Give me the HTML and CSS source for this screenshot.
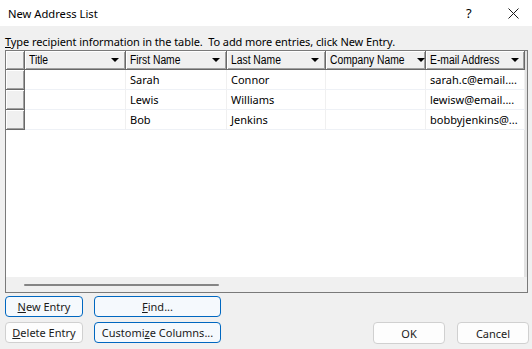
FILE: index.html
```html
<!DOCTYPE html>
<html>
<head>
	<title>New Address List</title>
	<link rel="stylesheet" href="styles.css">
</head>
<body>
	<div class="titlebar">
		<div class="caption">New Address List</div>
		<div class="help">?</div>
		<div class="close">
			<svg width="11" height="11" viewBox="0 0 11 11"><path d="M0.5 0.5L10.5 10.5M10.5 0.5L0.5 10.5" stroke="#1a1a1a" stroke-width="1"/></svg>
		</div>
	</div>
	<div class="content">
		<div class="hint"><u>T</u>ype recipient information in the table.&nbsp; To add more entries, click New Entry.</div>
		<div class="grid">
			<div class="rows">
				<div class="row head">
					<div class="sel"></div>
					<div class="hcell"><span>Title</span><i class="arrow"></i></div>
					<div class="hcell"><span>First Name</span><i class="arrow"></i></div>
					<div class="hcell"><span>Last Name</span><i class="arrow"></i></div>
					<div class="hcell"><span>Company Name</span><i class="arrow"></i></div>
					<div class="hcell"><span>E-mail Address</span><i class="arrow"></i></div>
				</div>
				<div class="row">
					<div class="sel"></div>
					<div class="cell"></div>
					<div class="cell">Sarah</div>
					<div class="cell">Connor</div>
					<div class="cell"></div>
					<div class="cell">sarah.c@email....</div>
				</div>
				<div class="row">
					<div class="sel"></div>
					<div class="cell"></div>
					<div class="cell">Lewis</div>
					<div class="cell">Williams</div>
					<div class="cell"></div>
					<div class="cell">lewisw@email....</div>
				</div>
				<div class="row">
					<div class="sel"></div>
					<div class="cell"></div>
					<div class="cell">Bob</div>
					<div class="cell">Jenkins</div>
					<div class="cell"></div>
					<div class="cell">bobbyjenkins@...</div>
				</div>
			</div>
			<div class="hscroll"><div class="thumb"></div></div>
		</div>
		<div class="actions">
			<div class="left">
				<button class="btn focus"><u>N</u>ew Entry</button>
				<button class="btn focus"><u>F</u>ind...</button>
				<button class="btn"><u>D</u>elete Entry</button>
				<button class="btn focus">Customi<u>z</u>e Columns...</button>
			</div>
			<div class="right">
				<button class="btn small">OK</button>
				<button class="btn small">Cancel</button>
			</div>
		</div>
	</div>
</body>
</html>
```

FILE: styles.css
```css
body {
	margin: 0;
	width: 532px;
	height: 349px;
	background-color: #f0f0f0;
	font-family: "Noto Sans", "Open Sans", sans-serif;
	font-size: 11px;
	color: #000;
	overflow: hidden;
}

.titlebar {
	height: 26px;
	background-color: #fff;
	display: flex;
	align-items: center;
}

.caption {
	flex: 1;
	padding-left: 8px;
	font-size: 11.2px;
}

.help {
	width: 20px;
	font-size: 13px;
	margin-right: 22px;
}

.close {
	width: 24px;
	display: flex;
	align-items: center;
}

.content {
	padding: 0 4px 0 5px;
}

.hint {
	margin-top: 8px;
	height: 16px;
	line-height: 16px;
	letter-spacing: -0.08px;
}

.grid {
	height: 241px;
	border: 1px solid #7a7a7a;
	background-color: #fff;
	display: flex;
	flex-direction: column;
}

.rows {
	flex: 1;
	border-right: 3px solid #e3e3e3;
}

.row {
	display: grid;
	grid-template-columns: 19px 101px 101px 99px 100px 99px;
	height: 20px;
}

.row.head {
	height: 19px;
}

.sel {
	background-color: #f0f0f0;
	border-right: 1px solid #696969;
	border-bottom: 1px solid #696969;
	box-shadow: inset 1px 1px #fff, inset -1px -1px #a0a0a0;
}

.hcell {
	background-color: #f0f0f0;
	border-right: 1px solid #696969;
	border-bottom: 1px solid #696969;
	box-shadow: inset 1px 1px #fff, inset -1px -1px #a0a0a0;
	display: flex;
	align-items: center;
	justify-content: space-between;
	padding: 0 6px 0 4px;
	font-family: "Liberation Sans", Arial, sans-serif;
	font-size: 12px;
	white-space: nowrap;
}

.hcell span {
	display: inline-block;
	transform: scaleX(0.86);
	transform-origin: left center;
}

.arrow {
	width: 0;
	height: 0;
	border-left: 4px solid transparent;
	border-right: 4px solid transparent;
	border-top: 4px solid #000;
}

.cell {
	border-right: 1px solid #f0f0f0;
	border-bottom: 1px solid #eef1f6;
	padding-left: 4px;
	line-height: 19px;
	white-space: nowrap;
	overflow: hidden;
}

.hscroll {
	height: 15px;
	background-color: #f0f0f0;
	display: flex;
	align-items: center;
}

.thumb {
	margin-left: 18px;
	width: 195px;
	height: 2px;
	border-radius: 1px;
	background-color: #858585;
}

.actions {
	margin-top: 3px;
	display: flex;
	justify-content: space-between;
	align-items: flex-end;
}

.left {
	display: grid;
	grid-template-columns: 78px 127px;
	column-gap: 11px;
	row-gap: 5px;
}

.right {
	display: flex;
	gap: 12px;
	margin-right: -1px;
	margin-bottom: -1px;
}

.btn {
	height: 21px;
	padding: 0;
	border: 1px solid #d0d0d0;
	border-radius: 4px;
	background-color: #fdfdfd;
	font-family: "Noto Sans", "Open Sans", sans-serif;
	font-size: 11px;
	color: #1a1a1a;
}

.btn.focus {
	border-color: #0067c0;
	background-color: #f5f9fd;
}

.btn.small {
	width: 72px;
	height: 22px;
}
```
